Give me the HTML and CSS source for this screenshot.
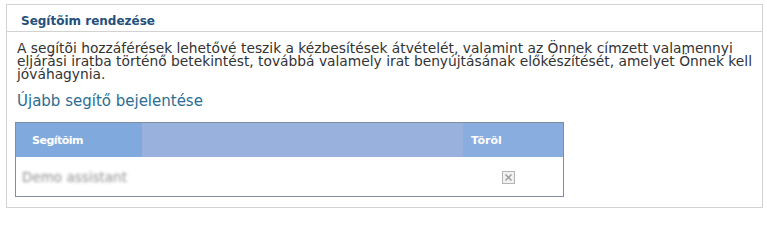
FILE: index.html
```html
<!DOCTYPE html>
<html lang="hu">
<head>
<meta charset="utf-8">
<link rel="stylesheet" href="styles.css">
</head>
<body>
<div class="panel">
  <div class="panel-title">Segítõim rendezése</div>
  <div class="panel-body">
    <p class="intro">A segítõi hozzáférések lehetővé teszik a kézbesítések átvételét, valamint az Önnek címzett valamennyi eljárási iratba történő betekintést, továbbá valamely irat benyújtásának előkészítését, amelyet Önnek kell jóváhagynia.</p>
    <a class="add-link" href="#">Újabb segítő bejelentése</a>
    <table class="grid">
      <thead>
        <tr>
          <th class="col-name">Segítõim</th>
          <th class="col-fill"></th>
          <th class="col-del">Töröl</th>
        </tr>
      </thead>
      <tbody>
        <tr>
          <td class="cell-name" colspan="2"><span class="blurred">Demo assistant</span></td>
          <td class="cell-del"><span class="del-icon"><svg width="13" height="13" viewBox="0 0 13 13"><rect x="0.5" y="0.5" width="12" height="12" fill="#f1f1f1" stroke="#b4b4b4"/><path d="M3.5 3.5 L9.5 9.5 M9.5 3.5 L3.5 9.5" stroke="#9a9a9a" stroke-width="1.4"/></svg></span></td>
        </tr>
      </tbody>
    </table>
  </div>
</div>
</body>
</html>
```
FILE: styles.css
```css
html, body {
  margin: 0;
  padding: 0;
  background: #ffffff;
}
body {
  font-family: "DejaVu Sans", Verdana, sans-serif;
  color: #333333;
}
.panel {
  margin: 4px 0 0 6px;
  width: 757px;
  height: 204px;
  border: 1px solid #d2d2d2;
  box-sizing: border-box;
}
.panel-title {
  height: 20px;
  padding: 6px 0 0 14px;
  line-height: 20px;
  border-bottom: 1px solid #d2d2d2;
  font-size: 12px;
  font-weight: bold;
  color: #24507c;
}
.panel-body {
  padding: 10px 8px 0 8px;
}
.intro {
  margin: 0;
  padding-left: 2px;
  font-size: 13.8px;
  line-height: 13px;
  color: #333333;
}
.add-link {
  display: block;
  margin-top: 12px;
  padding-left: 2px;
  font-size: 15px;
  line-height: 16px;
  color: #2b6d92;
  text-decoration: none;
}
.grid {
  margin-top: 13px;
  width: 549px;
  border-collapse: separate;
  border-spacing: 0;
  border: 1px solid #7d8da6;
}
.grid th {
  height: 34px;
  padding: 0;
  font-size: 11px;
  font-weight: bold;
  color: #ffffff;
  text-align: left;
}
.col-name {
  width: 110px;
  padding-left: 16px !important;
  background: #80a9de;
  letter-spacing: -0.5px;
}
.col-fill {
  background: #98b1dd;
}
.col-del {
  width: 92px;
  padding-left: 8px !important;
  background: #89addf;
}
.grid td {
  height: 39px;
  padding: 0;
}
.cell-name {
  padding-left: 6px !important;
}
.blurred {
  font-size: 13.5px;
  color: #8f8f8f;
  filter: blur(1.4px);
  display: inline-block;
}
.cell-del {
  padding-left: 39px !important;
}
.del-icon {
  display: inline-block;
  width: 13px;
  height: 13px;
  vertical-align: middle;
}
.del-icon svg {
  display: block;
}
```
